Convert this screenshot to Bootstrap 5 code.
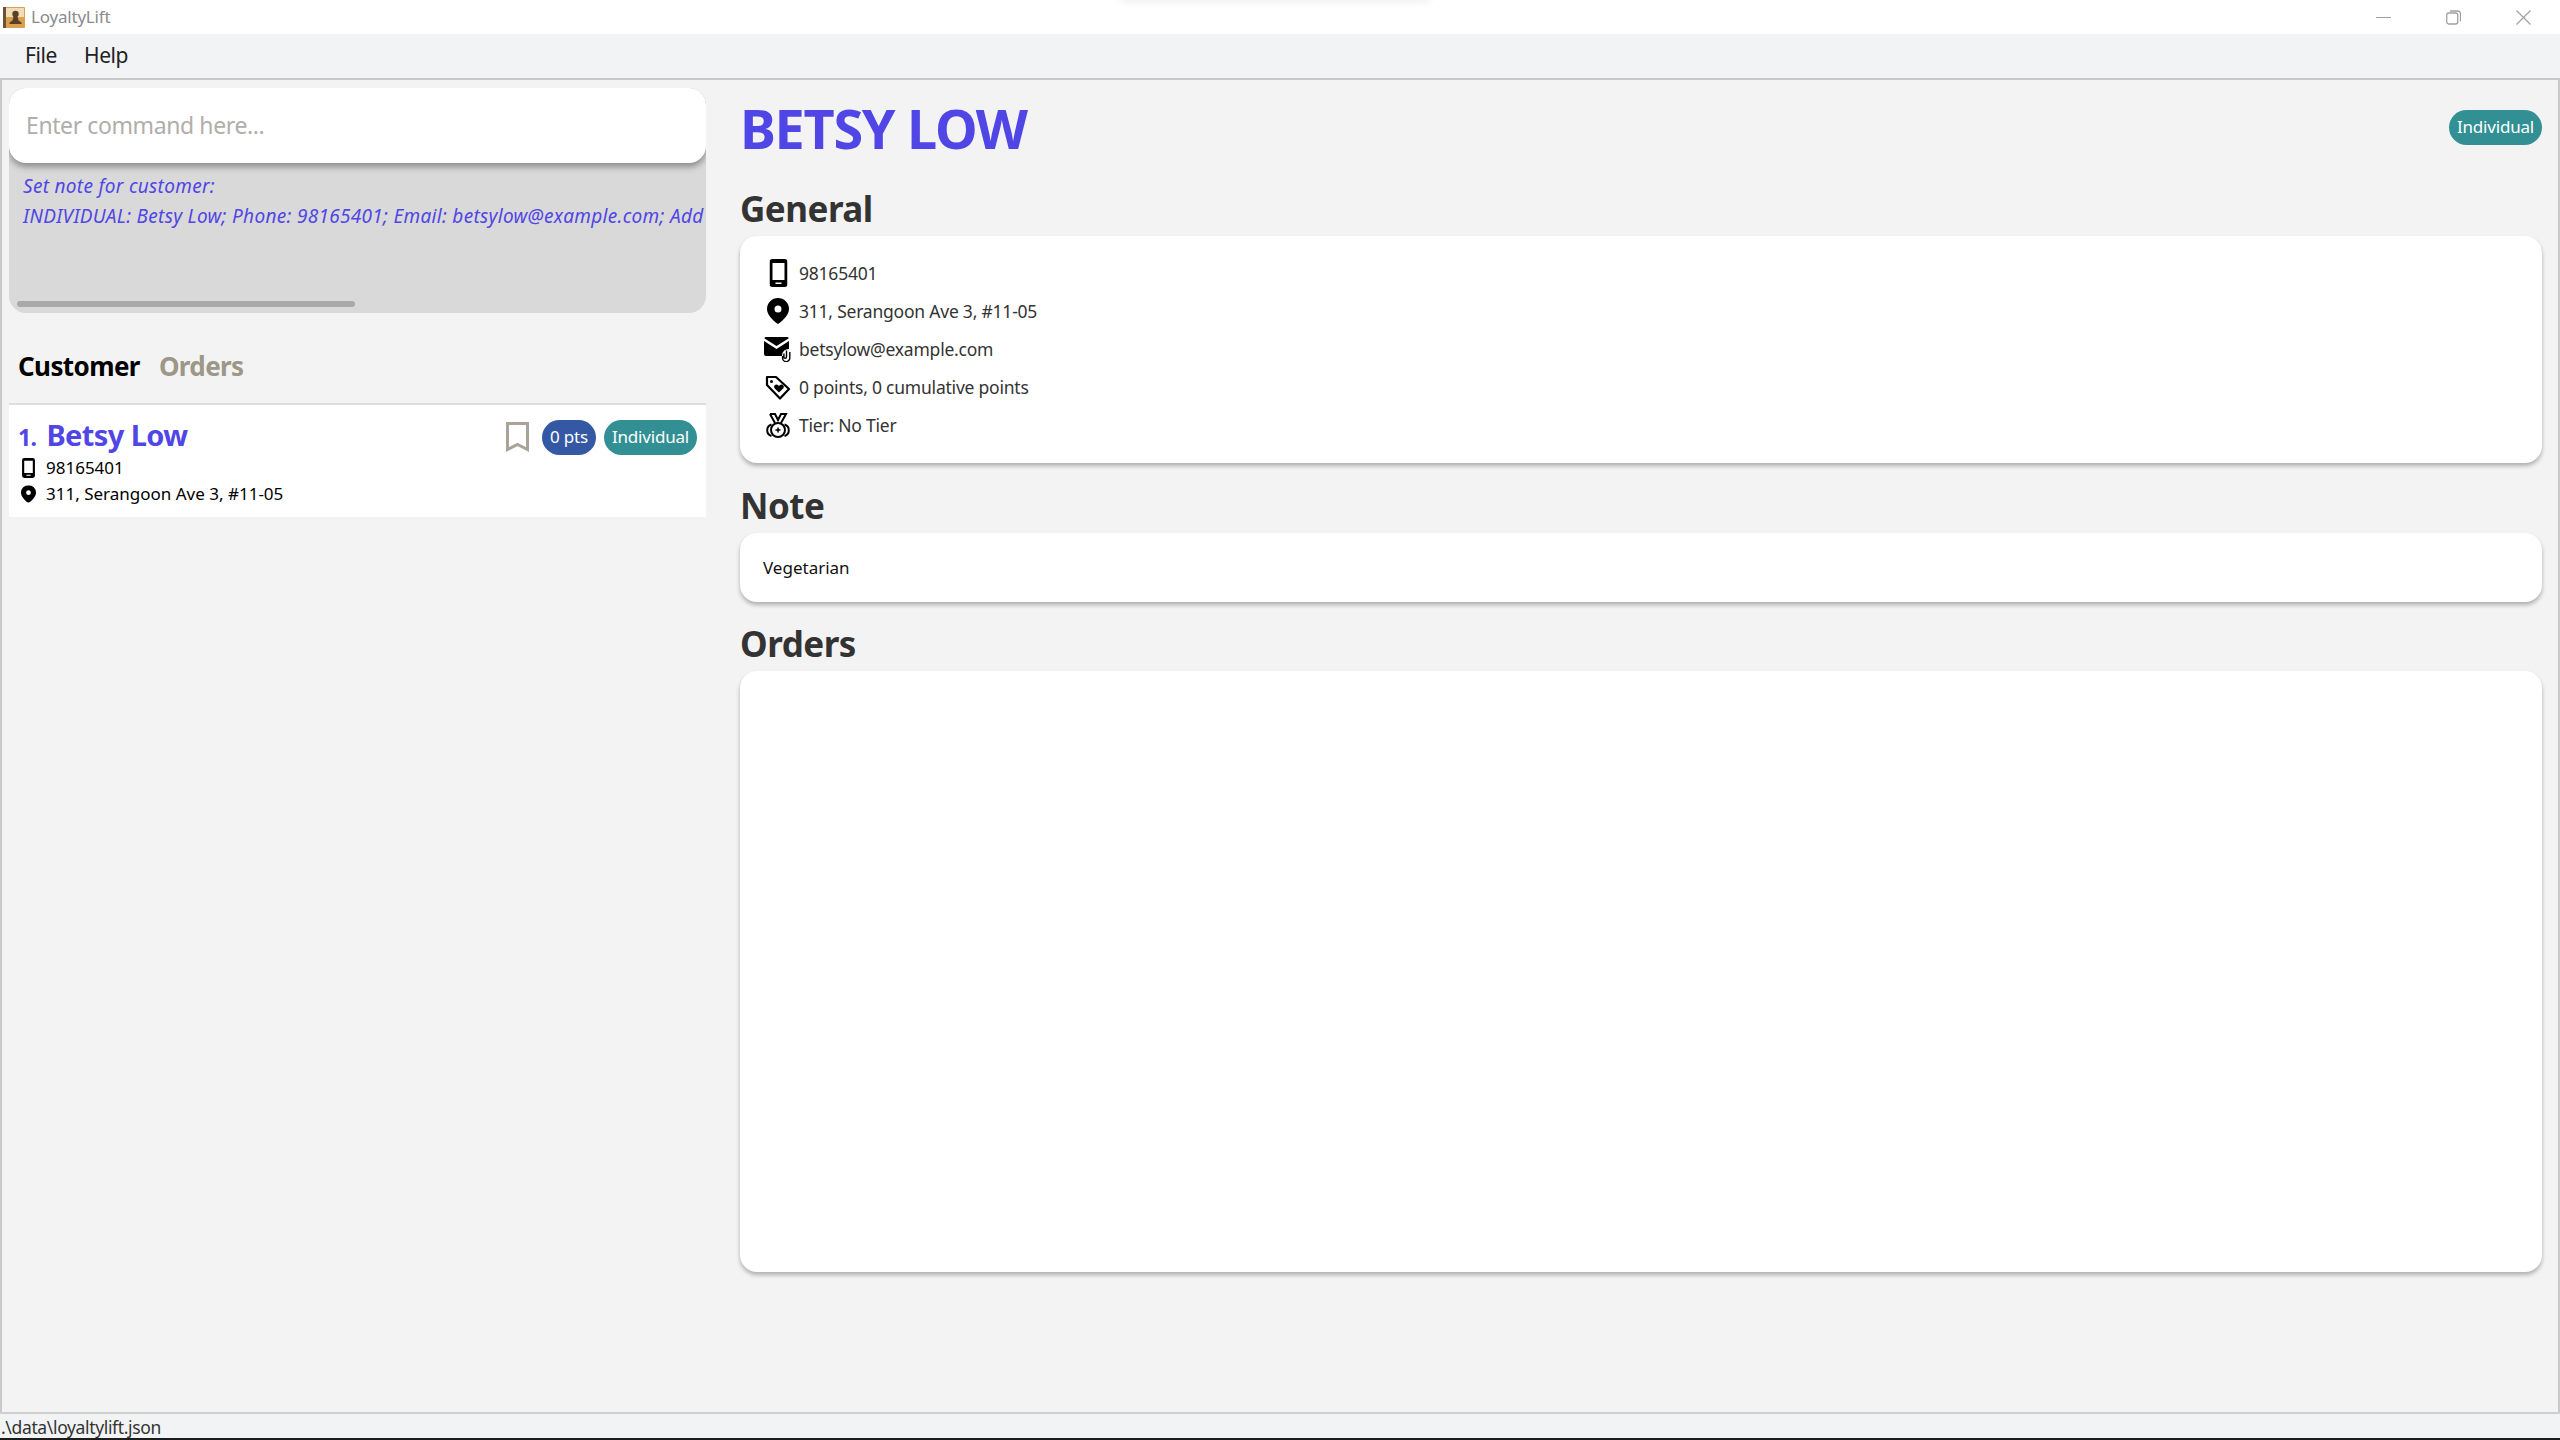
<!DOCTYPE html>
<html lang="en">
<head>
  <meta charset="UTF-8">
  <title>LoyaltyLift</title>
  <link href="https://cdn.jsdelivr.net/npm/bootstrap@5.3.0/dist/css/bootstrap.min.css" rel="stylesheet">
  <style>
    html, body { height: 100%; }
    body { font-family: "Noto Sans", "Open Sans", sans-serif; background: #f3f3f3; color: #333; overflow: hidden; }

    .app-window { height: 1440px; border-bottom: 2px solid #1c1c1c; }

    /* window chrome */
    .title-bar { height: 34px; background: #fff; padding-left: 3px; position: relative; }
    .title-glow { position: absolute; top: -3px; left: 1120px; width: 310px; height: 3px; box-shadow: 0 0 9px rgba(0,0,0,.16); }
    .title-text { font-size: 17px; color: #8b8b8b; margin-left: 6px; letter-spacing: -.2px; }
    .win-btn { width: 15px; height: 15px; display: block; }
    .win-controls { gap: 55px; padding-right: 29px; }
    .menu-strip { height: 46px; background: #f2f3f5; border-bottom: 2px solid #c9c9c9; padding-left: 25px; gap: 27px; font-size: 21px; color: #222; letter-spacing: -.4px; }

    /* main split */
    .main-area { min-height: 0; border-left: 2px solid #c9c9c9; border-right: 2px solid #c9c9c9; }
    .left-pane { width: 737px; padding: 8px 0 0 7px; flex: none; }
    .right-pane { padding: 0 16px 0 1px; min-width: 0; }

    /* command box + result */
    .result-box { width: 697px; height: 225px; background: #d9d9d9; border-radius: 17px; overflow: hidden; position: relative; }
    .cmd-input { height: 75px; background: #fff; border-radius: 17px; box-shadow: 0 4px 6px rgba(0,0,0,.35); padding-left: 17px; font-size: 23px; color: #b0adab; letter-spacing: -.4px; line-height: 75px; }
    .result-text { padding: 8px 0 0 14px; font-size: 19px; line-height: 30px; font-style: italic; color: #5046e5; white-space: nowrap; letter-spacing: .3px; }
    .scroll-thumb { position: absolute; left: 8px; bottom: 6px; width: 338px; height: 6px; background: #a9a9a9; border-radius: 3px; }

    /* tabs */
    .tab-row { height: 92px; padding: 16px 0 0 9px; gap: 19px; font-size: 26px; font-weight: 700; letter-spacing: -.6px; border-bottom: 2px solid #dedede; width: 697px; }
    .tab-on { color: #000; }
    .tab-off { color: #9c9888; }

    /* customer row */
    .cust-row { width: 697px; height: 112px; background: #fff; padding: 13px 9px 0 9px; color: #000; }
    .cust-name { font-size: 29px; font-weight: 700; color: #5046e5; line-height: 34px; letter-spacing: -.6px; }
    .cust-idx { font-size: 23px; margin-right: 10px; }
    .cust-line { font-size: 17px; line-height: 26px; letter-spacing: 0; }
    .cust-line svg { margin: 0 10px 0 3px; }
    .cust-lines { margin-top: 1px; }
    .cust-tags { padding-top: 2px; }
    .book-ico { margin: 2px 5px 0 0; }

    .pill-tag { height: 35px; border-radius: 18px; color: #fff; font-size: 17px; padding: 0 8px; letter-spacing: -.2px; line-height: 34px; display: block; }
    .pill-teal { background: #329094; }
    .pill-blue { background: #3558a5; }

    /* detail side */
    .detail-head { height: 95px; margin-bottom: 11px; }
    .detail-title { font-size: 54px; font-weight: 700; color: #5046e5; margin: 0; line-height: 1; letter-spacing: -1.3px; }
    .sec-title { font-size: 35px; font-weight: 700; color: #333; margin: 0 0 4px; line-height: 46px; letter-spacing: -.5px; }
    .sec-card { background: #fff; border-radius: 17px; box-shadow: 0 3px 4px rgba(0,0,0,.28); }
    .sec-general { height: 227px; padding: 18px 0 0 23px; margin-bottom: 20px; }
    .sec-note { height: 69px; padding: 0 0 0 23px; line-height: 70px; font-size: 17px; color: #111; margin-bottom: 19px; }
    .sec-orders { height: 601px; }
    .info-line { height: 38px; font-size: 17.5px; color: #333; letter-spacing: -.22px; }
    .info-ico { width: 30px; margin-right: 6px; flex: none; text-align: center; line-height: 0; }

    .status-line { height: 26px; background: #f2f3f5; border-top: 2px solid #cfcfcf; font-size: 17.5px; line-height: 26px; padding-left: 1px; color: #333; letter-spacing: -.35px; }
  </style>
</head>
<body>
  <div class="app-window d-flex flex-column">

    <div class="title-bar d-flex align-items-center justify-content-between">
      <div class="title-glow"></div>
      <div class="d-flex align-items-center">
        <svg width="22" height="21" viewBox="0 0 22 21">
          <rect x="0" y="0" width="22" height="21" rx="1" fill="#d9a14f"/>
          <rect x="0" y="0" width="3" height="21" fill="#6b5236"/>
          <rect x="3" y="1" width="18" height="9" fill="#f0dcb6"/>
          <circle cx="12.5" cy="7" r="3.2" fill="#5b4026"/>
          <path d="M10.5 9.500h4l1 4 3 2v1.500h-12v-1.500l3-2z" fill="#5b4026"/>
        </svg>
        <span class="title-text">LoyaltyLift</span>
      </div>
      <div class="d-flex align-items-center win-controls">
        <svg class="win-btn" viewBox="0 0 15 15"><path d="M0 7.500h15" stroke="#a0a0a0" stroke-width="1"/></svg>
        <svg class="win-btn" viewBox="0 0 15 15" fill="none" stroke="#a0a0a0" stroke-width="1.300"><rect x=".7" y="3" width="11" height="11" rx="2"/><path d="M4 1h7.500a3 3 0 0 1 3 3v7.500"/></svg>
        <svg class="win-btn" viewBox="0 0 15 15"><path d="M.5.500l14 14M14.500.500l-14 14" stroke="#a0a0a0" stroke-width="1.200"/></svg>
      </div>
    </div>

    <div class="menu-strip d-flex align-items-center">
      <span>File</span>
      <span>Help</span>
    </div>

    <div class="main-area d-flex flex-grow-1">
      <div class="left-pane">
        <div class="result-box">
          <div class="cmd-input">Enter command here...</div>
          <div class="result-text">Set note for customer:<br>INDIVIDUAL: Betsy Low; Phone: 98165401; Email: betsylow@example.com; Add</div>
          <div class="scroll-thumb"></div>
        </div>

        <div class="tab-row d-flex align-items-center">
          <span class="tab-on">Customer</span>
          <span class="tab-off">Orders</span>
        </div>

        <div class="cust-row d-flex justify-content-between">
          <div>
            <div class="cust-name"><span class="cust-idx">1.</span>Betsy Low</div>
            <div class="cust-lines">
              <div class="cust-line d-flex align-items-center">
                <svg width="15" height="20" viewBox="0 0 18 28"><use href="#ico-phone"/></svg>98165401
              </div>
              <div class="cust-line d-flex align-items-center">
                <svg width="15" height="20" viewBox="0 0 22 26"><use href="#ico-pin"/></svg>311, Serangoon Ave 3, #11-05
              </div>
            </div>
          </div>
          <div class="cust-tags d-flex align-items-start gap-2">
            <svg class="book-ico" width="23" height="30" viewBox="0 0 23 30" fill="none" stroke="#a8a598" stroke-width="3"><path d="M1.500 1.500h20v26l-10-5-10 5z"/></svg>
            <span class="pill-tag pill-blue">0 pts</span>
            <span class="pill-tag pill-teal">Individual</span>
          </div>
        </div>
      </div>

      <div class="right-pane flex-grow-1">
        <div class="detail-head d-flex align-items-center justify-content-between">
          <h1 class="detail-title">BETSY LOW</h1>
          <span class="pill-tag pill-teal">Individual</span>
        </div>

        <h2 class="sec-title">General</h2>
        <div class="sec-card sec-general">
          <div class="info-line d-flex align-items-center">
            <span class="info-ico"><svg width="19" height="28" viewBox="0 0 18 28"><use href="#ico-phone"/></svg></span>98165401
          </div>
          <div class="info-line d-flex align-items-center">
            <span class="info-ico"><svg width="22" height="26" viewBox="0 0 22 26"><use href="#ico-pin"/></svg></span>311, Serangoon Ave 3, #11-05
          </div>
          <div class="info-line d-flex align-items-center">
            <span class="info-ico"><svg width="28" height="25" viewBox="0 0 28 25"><path d="M2 0h21a2 2 0 0 1 1.800 1.200L12.500 9 .3 1.200A2 2 0 0 1 2 0zM0 4l12.500 8L25 4v8a6.500 6.500 0 0 0-7 6v1H2a2 2 0 0 1-2-2z"/><path d="M22.500 13.500v6.500a1.300 1.300 0 0 1-2.600 0v-3.500M25.800 15v6a3.600 3.600 0 0 1-7.200 0v-2" fill="none" stroke="#000" stroke-width="1.400"/></svg></span>betsylow@example.com
          </div>
          <div class="info-line d-flex align-items-center">
            <span class="info-ico"><svg width="26" height="25" viewBox="0 0 26 25"><path d="M2 2h9l13 12-9 9.500L2 10z" fill="none" stroke="#000" stroke-width="2.200" stroke-linejoin="round"/><circle cx="6.500" cy="6.500" r="1.500"/><path d="M14 17.500l-4.500-4.300a2.400 2.400 0 0 1 3.500-3.200l1 1 1-1a2.400 2.400 0 0 1 3.400 3.300z"/></svg></span>0 points, 0 cumulative points
          </div>
          <div class="info-line d-flex align-items-center">
            <span class="info-ico"><svg width="26" height="25" viewBox="0 0 26 25" fill="none" stroke="#000" stroke-width="2"><path d="M5 1h5l3 6 3-6h5l-5 9M5 1l5 9"/><circle cx="13" cy="17" r="7" fill="#fff"/><path d="M6.500 11.500a6 6 0 0 0 0 11.500M19.500 11.500a6 6 0 0 1 0 11.500"/><path d="M13 14.500v5M10.500 17h5" stroke-width="1.500"/></svg></span>Tier: No Tier
          </div>
        </div>

        <h2 class="sec-title">Note</h2>
        <div class="sec-card sec-note">Vegetarian</div>

        <h2 class="sec-title">Orders</h2>
        <div class="sec-card sec-orders"></div>
      </div>
    </div>

    <div class="status-line">.\data\loyaltylift.json</div>
  </div>

  <svg width="0" height="0" class="d-block">
    <defs>
      <symbol id="ico-phone" viewBox="0 0 18 28"><path fill-rule="evenodd" d="M3 0h12a3 3 0 0 1 3 3v22a3 3 0 0 1-3 3H3a3 3 0 0 1-3-3V3a3 3 0 0 1 3-3zM3 4v17h12V4zM6 23.500v1.500h6v-1.500z"/></symbol>
      <symbol id="ico-pin" viewBox="0 0 22 26"><path fill-rule="evenodd" d="M11 0a11 11 0 0 1 11 11c0 5-5 11-11 15C5 22 0 16 0 11A11 11 0 0 1 11 0zm0 7.500a3.500 3.500 0 1 0 0 7 3.500 3.500 0 0 0 0-7z"/></symbol>
    </defs>
  </svg>

  <script src="https://cdn.jsdelivr.net/npm/bootstrap@5.3.0/dist/js/bootstrap.bundle.min.js"></script>
</body>
</html>
